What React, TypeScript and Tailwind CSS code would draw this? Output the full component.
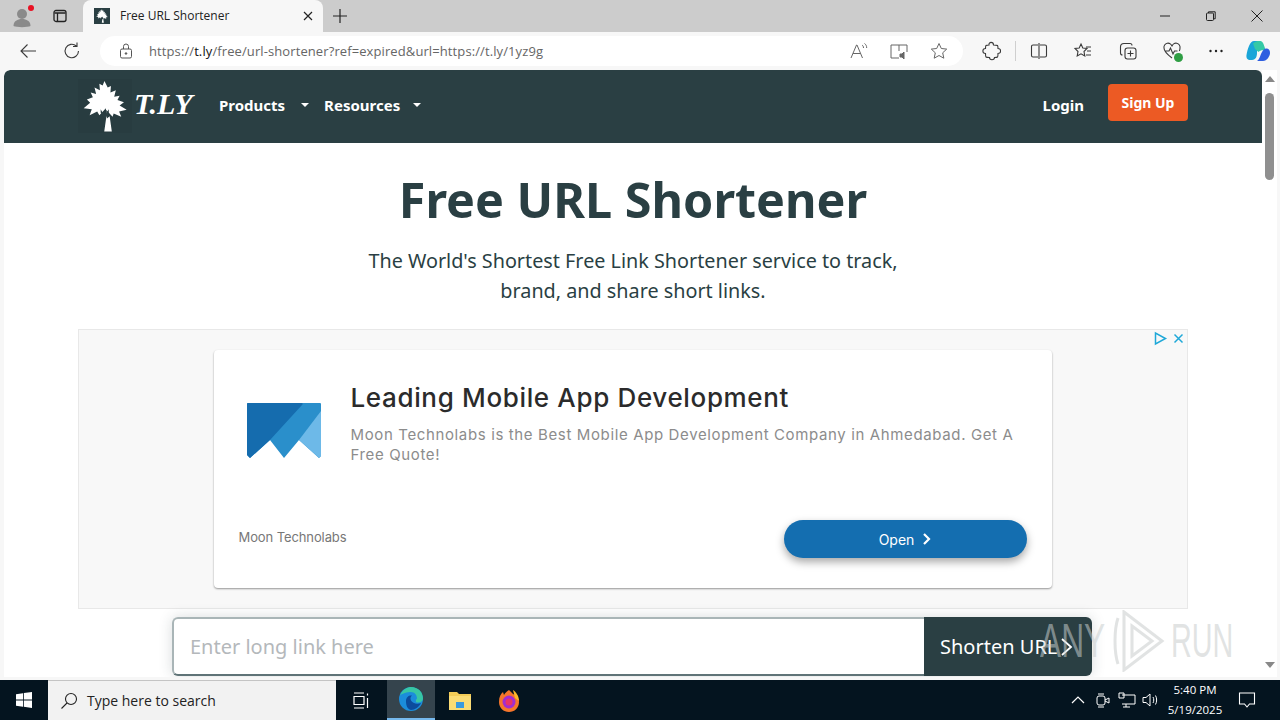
import React from "react";

const ui = { fontFamily: '"Open Sans","Noto Sans",sans-serif' };
const page = { fontFamily: '"Noto Sans","Open Sans",sans-serif' };
const ad = { fontFamily: 'Inter,"Liberation Sans",sans-serif' };

function Tree({ size = 48, color = "#fff" }: { size?: number; color?: string }) {
  return (
    <svg width={size} height={size} viewBox="0 0 48 48" fill={color}>
      <path d="M23.500 1l3 6 3-1.500-.5 6 5-2-1.500 6 5-1-2 4 6 2-4 3 6.500 4-7 1.500 2 5-7-3-1 3-6-6.500.8 8 2.500-2 2 14h-7l2-14-.5-7.500-6 6.500-2-3.500-7 3.500 2-5.500-7.500-1 6-5-3-3 5.500-2-2-4.500 5 1.500-1.500-6 5 2.500-.5-6 3 1.500z" />
      <path d="M20 27l3.500 6 4-6 0 3-3.500 6-4-6z" fill="#2a3f43" />
    </svg>
  );
}

function Toolbar({ children, w = 20 }: { children: React.ReactNode; w?: number }) {
  return (
    <svg width={w} height={20} viewBox={`0 0 ${w} 20`} fill="none" stroke="#3a3a3a" strokeWidth="1.100">
      {children}
    </svg>
  );
}

function BrowserChrome() {
  return (
    <div className="shrink-0" style={ui}>
      <div className="h-8 bg-[#cccccc] flex items-end">
        <div className="w-[83px] h-8 flex items-center relative shrink-0">
          <svg width="24" height="24" viewBox="0 0 24 24" className="ml-[10px]" fill="#8a8a8a">
            <circle cx="12" cy="10" r="5" />
            <path d="M3.500 22c0-5 4-7 8.500-7s8.500 2 8.500 7c-3 1.500-14 1.500-17 0z" />
          </svg>
          <span className="absolute left-[28px] top-[5px] w-[6px] h-[6px] rounded-full bg-[#e81123]" />
          <svg width="16" height="16" viewBox="0 0 16 16" className="ml-[18px]" fill="none" stroke="#222" strokeWidth="1.300">
            <rect x="2" y="2.500" width="12" height="11" rx="2" />
            <path d="M2.500 5h11M5.500 5v8" />
          </svg>
        </div>
        <div className="w-[240px] h-8 bg-[#f7f7f7] rounded-t-lg flex items-center pl-[11px] pr-[9px] shrink-0">
          <span className="w-4 h-4 bg-[#2a3f43] flex items-center justify-center shrink-0">
            <Tree size={14} />
          </span>
          <span className="ml-[10px] text-xs text-[#222] flex-1">Free URL Shortener</span>
          <svg width="12" height="12" viewBox="0 0 12 12" stroke="#222" strokeWidth="1.200">
            <path d="M2 2l8 8M10 2l-8 8" />
          </svg>
        </div>
        <div className="w-[34px] h-8 flex items-center justify-center shrink-0">
          <svg width="16" height="16" viewBox="0 0 16 16" stroke="#222" strokeWidth="1.200">
            <path d="M8 1v14M1 8h14" />
          </svg>
        </div>
        <div className="flex-1" />
        <div className="flex h-8 items-center pr-[17px] gap-[34px]">
          <svg width="12" height="12" viewBox="0 0 12 12" stroke="#222"><path d="M1 6h10" /></svg>
          <svg width="12" height="12" viewBox="0 0 12 12" fill="none" stroke="#222">
            <rect x="1.500" y="3" width="7" height="7.500" rx="1" />
            <path d="M3.500 3V1.800h6.700v7H8.500" />
          </svg>
          <svg width="12" height="12" viewBox="0 0 12 12" stroke="#222"><path d="M0.500 0.500l11 11M11.500 0.500l-11 11" /></svg>
        </div>
      </div>
      <div className="h-[38px] bg-[#f7f7f7] flex items-center relative">
        <div className="ml-[18px] w-5 h-5 flex items-center justify-center">
          <Toolbar><path d="M18 10H3M9.500 3.500L3 10l6.500 6.500" /></Toolbar>
        </div>
        <div className="ml-[24px] w-5 h-5 flex items-center justify-center">
          <Toolbar><path d="M16.500 10a6.700 6.700 0 1 1-2.200-5M15 1.500V5.500h-4" /></Toolbar>
        </div>
        <div className="ml-[18px] w-[863px] h-[30px] bg-white rounded-full flex items-center pl-[19px] shrink-0">
          <svg width="14" height="16" viewBox="0 0 14 16" fill="none" stroke="#555" strokeWidth="1">
            <rect x="1.500" y="6" width="11" height="9" rx="1.500" />
            <path d="M4.500 6V3.500a2.500 2.500 0 0 1 5 0V6" />
            <circle cx="7" cy="10.500" r="0.800" fill="#555" />
          </svg>
          <span className="ml-[16px] mt-[1px] text-[13px] text-[#666] whitespace-nowrap tracking-[0.1px]">
            https://<span className="text-[#111]">t.ly</span>/free/url-shortener?ref=expired&amp;url=https://t.ly/1yz9g
          </span>
          <div className="flex-1" />
          <div className="flex items-center gap-[20px] pr-[14px]">
            <svg width="20" height="20" viewBox="0 0 20 20" fill="none" stroke="#666" strokeWidth="1">
              <path d="M2 17l5.500-13h.5l5.500 13M4 12.500h7.500" />
              <path d="M13 4c1 .7 1.500 1.500 1.500 3M15.500 2.500c1.500 1 2.200 2.500 2.200 4.500" />
            </svg>
            <svg width="20" height="20" viewBox="0 0 20 20" fill="none" stroke="#666" strokeWidth="1">
              <path d="M10 4H2v13h8M10 4h8v7M10 4v6" />
              <path d="M11 13h2l2-2v7l-2-2h-2z" fill="#666" />
            </svg>
            <svg width="20" height="20" viewBox="0 0 20 20" fill="none" stroke="#666" strokeWidth="1">
              <path d="M10 2.500l2.300 5 5.400.6-4 3.700 1.100 5.400-4.800-2.700-4.800 2.700 1.100-5.400-4-3.700 5.400-.6z" />
            </svg>
          </div>
        </div>
        <div className="ml-[18px] flex items-center">
          <Toolbar>
            <path d="M8 4c-.5-3.500 4.500-3.500 4.500 0 2 0 3.500 0 4 .5s.5 2 .5 3c3.500 0 3.500 5 0 5 0 1.500 0 3-.5 3.500s-2 .5-3 .5c0 3-5 3-5 0-1.500 0-3 0-3.500-.5s-.5-2-.5-3.500c-3.500 0-3.500-5 0-5 0-1 0-2.500.5-3S6.500 4 8 4z" />
          </Toolbar>
          <span className="w-px h-5 bg-[#cfcfcf] ml-[14px]" />
          <span className="ml-[13px] flex">
            <Toolbar><path d="M9 4H4a1.500 1.500 0 0 0-1.500 1.500v9A1.500 1.500 0 0 0 4 16h5M11 4h5a1.500 1.500 0 0 1 1.500 1.500v9A1.500 1.500 0 0 1 16 16h-5M10 2v16" /></Toolbar>
          </span>
          <span className="ml-[24px] flex">
            <Toolbar><path d="M8 3l1.800 4 4.200.5-3 3 .8 4.500L8 12.800 4.200 15 5 10.500l-3-3 4.200-.5zM13 6h5M14 10h4M13 14h5" /></Toolbar>
          </span>
          <span className="ml-[25px] flex">
            <Toolbar>
              <rect x="7" y="7" width="11" height="11" rx="2.500" />
              <path d="M12.500 9.500v6M9.500 12.500h6M14 4.500a2 2 0 0 0-2-2H6a3.500 3.500 0 0 0-3.500 3.500v6a2 2 0 0 0 2 2" />
            </Toolbar>
          </span>
          <span className="ml-[24px] flex relative">
            <Toolbar>
              <path d="M10 17C6 14 2 11 2 7a4 4 0 0 1 8-1.500A4 4 0 0 1 18 7c0 1-.2 2-.7 3M2.500 10H7l1.500-3 2.500 6 1.500-3h3" />
            </Toolbar>
            <span className="absolute right-[-1px] bottom-[-1px] w-[9px] h-[9px] rounded-full bg-[#2f9e44]" />
          </span>
          <span className="ml-[24px] flex">
            <svg width="20" height="20" viewBox="0 0 20 20" fill="#222"><circle cx="4.500" cy="10" r="1.200" /><circle cx="10" cy="10" r="1.200" /><circle cx="15.500" cy="10" r="1.200" /></svg>
          </span>
          <span className="ml-[19px] flex">
            <svg width="26" height="26" viewBox="0 0 26 26">
              <path d="M9 3h7c-2 2-4 7-4 12 0 3-1 7-5 7H5.500C2.500 22 1 20 1.500 17 2.500 11 5 3 9 3z" fill="#19a5d8" />
              <path d="M8 5.500c3-3 6-2.500 7-2.500 2 0 3 1.500 3.500 3l2.500 7c-2-1.500-6-1-7.500 1L10 11z" fill="#35c9a6" />
              <path d="M18 23H12c3-2 3-6 5-9 1-2 3-4 5-3.500 2 .5 3 2 3 4.500 0 3-3 8-7 8z" fill="#2f5fe0" />
            </svg>
          </span>
        </div>
      </div>
    </div>
  );
}

function Nav() {
  return (
    <div className="h-[73px] bg-[#2a3f43] flex items-center pl-[74px] pr-[74px] shrink-0 rounded-tl-md" style={page}>
      <div className="w-[54px] h-[54px] -mt-[2px] flex items-center justify-center bg-[#283c40]"><Tree size={52} /></div>
      <span className="ml-[2px] w-[64px] text-[30px] leading-none italic font-bold text-white -mt-[6px] whitespace-nowrap" style={{ fontFamily: '"Liberation Serif",serif' }}>T.LY</span>
      <div className="ml-[21px] -mt-[3px] flex items-center text-white font-bold text-[15px] gap-[6px]">
        <span>Products</span>
        <span className="ml-[10px] w-0 h-0 border-x-[4px] border-x-transparent border-t-[4px] border-t-white" />
      </div>
      <div className="ml-[15px] -mt-[3px] flex items-center text-white font-bold text-[15px] gap-[6px]">
        <span>Resources</span>
        <span className="ml-[7px] w-0 h-0 border-x-[4px] border-x-transparent border-t-[4px] border-t-white" />
      </div>
      <div className="flex-1" />
      <span className="text-white font-bold text-[15px] mr-[24px] -mt-[3px]">Login</span>
      <span className="w-20 h-[37px] -mt-[8px] rounded bg-[#ec5a24] text-white font-bold text-[14px] flex items-center justify-center">Sign Up</span>
    </div>
  );
}

function AdCard() {
  return (
    <div className="h-[280px] bg-[#f8f8f8] border border-[#e8e8e8] relative flex justify-center pt-5 pr-[1px]" style={ad}>
      <div className="absolute right-[2px] top-[1px] flex items-center gap-1">
        <svg width="15" height="15" viewBox="0 0 15 15" fill="none" stroke="#1fa8d8" strokeWidth="1.500"><path d="M2.500 2v11l10-5.500z" /></svg>
        <svg width="13" height="15" viewBox="0 0 13 15" stroke="#1fa8d8" strokeWidth="1.500"><path d="M2.500 3.500l8 8M10.500 3.500l-8 8" /></svg>
      </div>
      <div className="w-[838px] h-[238px] bg-white rounded shadow-[0_1px_2px_rgba(0,0,0,0.4)] flex flex-col">
        <div className="flex pl-[33px] pr-[25px] pt-[29px]">
          <svg width="74" height="56" viewBox="0 0 74 56" className="mt-[24px] shrink-0">
            <path d="M1 0h72a1 1 0 0 1 1 1v52l-2 2-20-18-15 18-14-18L3 55l-3-3V1a1 1 0 0 1 1-1z" fill="#2a8fcb" />
            <path d="M1 0h53a1 1 0 0 1 1 2L23 37 3 55l-3-3V1a1 1 0 0 1 1-1z" fill="#156cae" />
            <path d="M74 8v45l-2 2-20-18z" fill="#6db9e8" />
          </svg>
          <div className="ml-[30px] mt-[1px] w-[668px]">
            <div className="text-[26px] leading-[36px] font-medium text-[#2b2b2b] tracking-[0.65px] whitespace-nowrap">Leading Mobile App Development</div>
            <div className="mt-[9px] text-[15px] leading-5 text-[#8c8c8c] tracking-[0.63px]">Moon Technolabs is the Best Mobile App Development Company in Ahmedabad. Get A Free Quote!</div>
          </div>
        </div>
        <div className="flex-1" />
        <div className="flex items-center justify-between pl-[25px] pr-[25px] pb-[30px]">
          <span className="text-[13px] text-[#777] tracking-[-0.1px] -mt-[2px]">Moon Technolabs</span>
          <span className="w-[243px] h-[38px] rounded-full bg-[#146eb0] shadow-[0_4px_8px_rgba(0,0,0,0.35)] text-white text-[14px] flex items-center justify-center gap-[8px]">
            Open
            <svg width="9" height="12" viewBox="0 0 9 12" fill="none" stroke="#fff" strokeWidth="2.200"><path d="M2 1l5 5-5 5" /></svg>
          </span>
        </div>
      </div>
    </div>
  );
}

function Page() {
  return (
    <div className="flex-1 flex min-h-0 pl-1 bg-[#f7f7f7]">
      <div className="flex-1 flex flex-col bg-white relative overflow-hidden rounded-t-md min-w-0">
        <Nav />
        <div className="flex-1 flex flex-col items-center" style={page}>
          <h1 className="mt-[24px] text-[48.500px] leading-[64px] font-bold text-[#2a3f43] whitespace-nowrap">Free URL Shortener</h1>
          <p className="mt-[15px] w-[560px] text-center text-[19.800px] leading-[30px] text-[#2a3f43]">The World's Shortest Free Link Shortener service to track, brand, and share short links.</p>
          <div className="mt-[23px] w-[1110px]"><AdCard /></div>
        </div>
        <div className="absolute left-[168px] top-[547px] w-[920px] h-[59px] flex rounded-md shadow-[0_0_14px_rgba(42,63,67,0.18)]" style={page}>
          <div className="w-[752px] h-full bg-white border-2 border-[#a9b5b7] border-b-[#5f7377] border-r-0 rounded-l-md flex items-center pl-[16px]">
            <span className="text-[20px] text-[#b4b8bb]">Enter long link here</span>
          </div>
          <div className="flex-1 bg-[#2a3f43] rounded-r-md flex items-center pl-[16px] text-white text-[20px] gap-[3px]">
            <span>Shorten URL</span>
            <svg width="14" height="20" viewBox="0 0 14 20" fill="none" stroke="#fff" strokeWidth="1.800"><path d="M2 2l9 8-9 8" /></svg>
          </div>
        </div>
      </div>
      <div className="w-[15px] bg-white relative flex justify-center shrink-0">
        <span className="mt-[6px] h-0 w-0 border-x-[5px] border-x-transparent border-b-[6px] border-b-[#888]" />
        <span className="absolute top-[23px] w-[9px] h-[87px] rounded-full bg-[#8f8f8f]" />
        <span className="absolute bottom-[9px] h-0 w-0 border-x-[5px] border-x-transparent border-t-[6px] border-t-[#888]" />
      </div>
      <div className="w-[3px]" />
    </div>
  );
}

function Taskbar() {
  return (
    <div className="h-10 bg-[#04141f] flex items-stretch shrink-0" style={ui}>
      <div className="w-12 flex items-center justify-center">
        <svg width="16" height="16" viewBox="0 0 16 16" fill="#fff"><path d="M0 2.200l7-1v6.400H0zM7.800 1l8.200-1v7.600H7.800zM0 8.400h7v6.400l-7-1zM7.800 8.400H16V16l-8.200-1.200z" /></svg>
      </div>
      <div className="w-[288px] bg-[#f2f2f2] flex items-center pl-[12px] border-t border-[#c4c4c4]">
        <svg width="18" height="18" viewBox="0 0 18 18" fill="none" stroke="#222" strokeWidth="1.100"><circle cx="11" cy="7" r="5.500" /><path d="M7 11l-5.500 5.500" /></svg>
        <span className="ml-[9px] text-sm text-[#222]">Type here to search</span>
      </div>
      <div className="w-[51px] flex items-center justify-center">
        <svg width="17" height="17" viewBox="0 0 17 17" fill="none" stroke="#fff" strokeWidth="1.200">
          <path d="M1 1h10M1 16h10M1 4.500h10v8H1zM14.500 1.500v2M14.500 6v10" />
        </svg>
      </div>
      <div className="w-[48px] bg-[#35444d] flex items-center justify-center border-b-2 border-[#76b9ed]">
        <svg width="26" height="26" viewBox="0 0 26 26">
          <circle cx="13" cy="13" r="12" fill="#1b8ddb" />
          <path d="M2 10C4 3 10 1 13 1c7 0 12 5 12 11.500 0 3-3 4.500-6 4-2-.5-1-3 0-4 0-4-3-7-7-6.500C7 6.500 3 8 2 10z" fill="#37c6a4" />
          <path d="M8 15c0-4 3-6 6-5.500-1.500 1-2 3-1 5 1.500 3 6 4 10 2.500-2 4-6 7-10 7-4-1-5-5-5-9z" fill="#0c4c9c" />
        </svg>
      </div>
      <div className="w-[49px] flex items-center justify-center">
        <svg width="24" height="22" viewBox="0 0 24 22">
          <path d="M1 3h8l2 2h12v16H1z" fill="#f3cc57" />
          <path d="M1 7h22v14H1z" fill="#fbdc74" />
          <path d="M8 13h8v6H8z" fill="#3a9adf" />
        </svg>
      </div>
      <div className="w-[49px] flex items-center justify-center">
        <svg width="24" height="25" viewBox="0 0 24 25">
          <path d="M2 14C2 9 3.500 6 6 4l1 3c1-2 3-4 5-5l4 4c3 1 6 4 6 8 0 6-4.500 10-10 10S2 20 2 14z" fill="#f6762b" />
          <path d="M16 2c3 2 6 6 6 11l-4-3z" fill="#fcb82a" />
          <circle cx="12" cy="14" r="6.500" fill="#a22dd0" />
          <circle cx="12" cy="14" r="3.500" fill="#e8336a" />
        </svg>
      </div>
      <div className="flex-1" />
      <div className="flex items-center text-white">
        <svg width="14" height="10" viewBox="0 0 14 10" fill="none" stroke="#fff" strokeWidth="1.200"><path d="M1 8l6-6 6 6" /></svg>
        <svg className="ml-[11px]" width="14" height="18" viewBox="0 0 14 18" fill="none" stroke="#fff" strokeWidth="1"><rect x="1" y="5" width="8" height="9" rx="2" /><path d="M9 9l4-2v5l-4-2M2 3h6M2 16h6" /></svg>
        <svg className="ml-[8px]" width="18" height="16" viewBox="0 0 18 16" fill="none" stroke="#fff" strokeWidth="1"><path d="M4 3h13v9H4M8 12v3M5 15h7M1 1h5v5H1z" /></svg>
        <svg className="ml-[6px]" width="18" height="16" viewBox="0 0 18 16" fill="none" stroke="#fff" strokeWidth="1"><path d="M1 5.500h3L8 2v12l-4-3.500H1zM11 5c1 1.500 1 4.500 0 6M13.500 3.500c1.500 2.500 1.500 6.500 0 9" /></svg>
        <div className="ml-[2px] w-[66px] text-center text-[11.500px] leading-[20px] text-white">
          <div>5:40 PM</div>
          <div>5/19/2025</div>
        </div>
        <svg className="ml-[10px]" width="18" height="18" viewBox="0 0 18 18" fill="none" stroke="#fff" strokeWidth="1.100"><path d="M1.500 2h15v11h-5L9 16l-2.500-3h-5z" /></svg>
        <div className="w-[24px]" />
      </div>
    </div>
  );
}

function Watermark() {
  return (
    <div className="absolute left-[1040px] top-[610px] h-[62px] flex items-center pointer-events-none select-none" style={{ fontFamily: '"Liberation Sans",sans-serif' }}>
      <span className="w-[66px] text-[48px] leading-[62px] text-[rgba(200,206,206,0.55)] origin-left scale-x-[0.66] whitespace-nowrap">ANY</span>
      <svg width="56" height="62" viewBox="0 0 56 62" fill="none" stroke="rgba(205,208,208,0.6)" strokeWidth="3" className="ml-[4px]">
        <path d="M8 8C4 20 4 42 8 54M14 2l38 29-38 29zM22 16l20 15-20 15z" />
      </svg>
      <span className="ml-[5px] w-[63px] text-[48px] leading-[62px] text-[rgba(205,208,208,0.6)] origin-left scale-x-[0.6] whitespace-nowrap">RUN</span>
    </div>
  );
}

export default function App() {
  return (
    <div className="w-[1280px] h-[720px] overflow-hidden flex flex-col bg-white relative">
      <BrowserChrome />
      <Page />
      <div className="h-[3px] bg-[#f7f7f7] shrink-0" />
      <Taskbar />
      <Watermark />
    </div>
  );
}
